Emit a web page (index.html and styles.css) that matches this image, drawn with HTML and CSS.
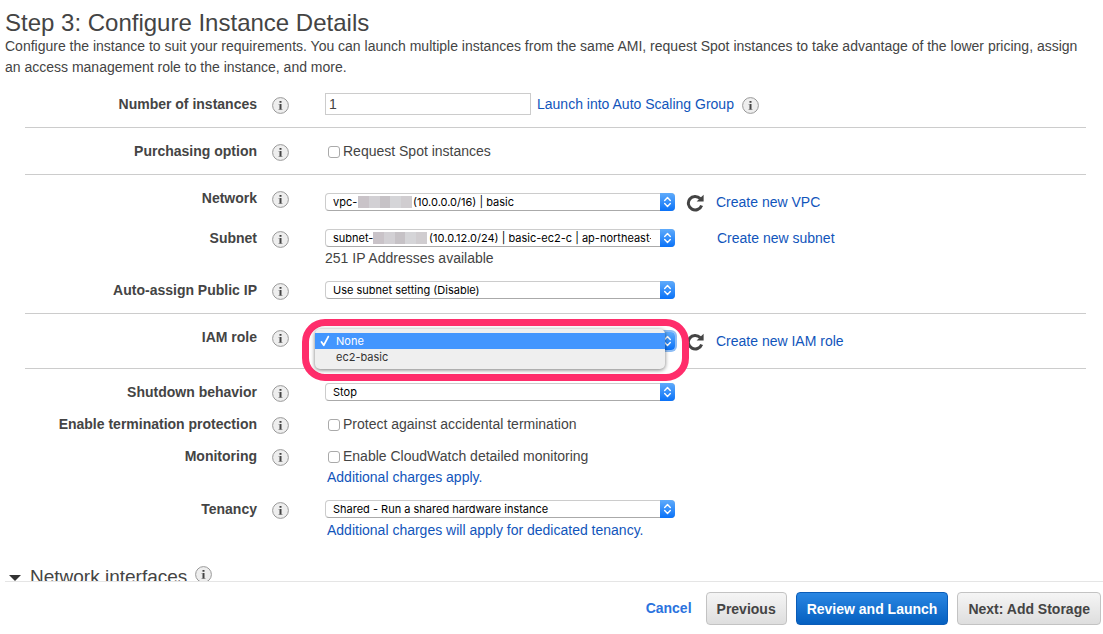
FILE: index.html
```
<!DOCTYPE html>
<html lang="en">
<head>
<meta charset="utf-8">
<title>Configure Instance Details</title>
<link rel="stylesheet" href="styles.css">
</head>
<body>
<svg class="defs" aria-hidden="true">
  <symbol id="info" viewBox="0 0 17 17">
    <circle cx="8.5" cy="8.5" r="7.9" fill="#eee" stroke="#999"/>
    <path d="M7.5 4h2v1.8h-2zM7.5 7h2v6h-2z" fill="#444"/>
    <path d="M6.5 7h1v.8h-1zM6.5 12.3h4v.7h-4z" fill="#888"/>
  </symbol>
  <symbol id="refresh" viewBox="0 0 18 18">
    <path d="M14.2 4.6A6.8 6.8 0 1 0 15.6 11.4" fill="none" stroke="#444" stroke-width="3"/>
    <path d="M17.6 .8V7.6H10.6z" fill="#444"/>
  </symbol>
  <symbol id="arrows" viewBox="0 0 15 18">
    <path d="M4.7 7.4l2.8-2.8 2.8 2.8M4.7 10.6l2.8 2.8 2.8-2.8" fill="none" stroke="#fff" stroke-width="1.4" stroke-linecap="round" stroke-linejoin="round"/>
  </symbol>
</svg>
<main class="content">
  <h1 class="title">Step 3: Configure Instance Details</h1>
  <p class="intro">Configure the instance to suit your requirements. You can launch multiple instances from the same AMI, request Spot instances to take advantage of the lower pricing, assign an access management role to the instance, and more.</p>
  <form class="form" id="config">
    <section class="group first">
      <div class="row">
        <label class="label" for="count">Number of instances</label>
        <button type="button" class="info" aria-label="About number of instances"><svg><use href="#info"/></svg></button>
        <div class="line low">
          <input class="text" id="count" type="text" value="1">
          <a class="link" href="#asg">Launch into Auto Scaling Group</a>
          <button type="button" class="info inline" aria-label="About Auto Scaling"><svg><use href="#info"/></svg></button>
        </div>
      </div>
    </section>
    <section class="group">
      <div class="row">
        <span class="label">Purchasing option</span>
        <button type="button" class="info" aria-label="About purchasing option"><svg><use href="#info"/></svg></button>
        <label class="check"><input class="box" type="checkbox">Request Spot instances</label>
      </div>
    </section>
    <section class="group">
      <div class="row">
        <label class="label" for="network">Network</label>
        <button type="button" class="info" aria-label="About network"><svg><use href="#info"/></svg></button>
        <div class="line tall">
          <div class="pick">
            <select class="select" id="network"><option>vpc-&nbsp;&nbsp;&nbsp;&nbsp;&nbsp;&nbsp;&nbsp;&nbsp;&nbsp;&nbsp;&nbsp;&nbsp;&nbsp;&nbsp;&nbsp;&nbsp;&nbsp;&nbsp;(10.0.0.0/16) | basic</option></select>
            <span class="mask vpc"></span>
            <svg class="cap"><use href="#arrows"/></svg>
          </div>
          <button type="button" class="refresh" aria-label="Refresh networks"><svg><use href="#refresh"/></svg></button>
          <a class="link" href="#vpc">Create new VPC</a>
        </div>
      </div>
      <div class="row">
        <label class="label" for="subnet">Subnet</label>
        <button type="button" class="info" aria-label="About subnet"><svg><use href="#info"/></svg></button>
        <div class="field">
          <div class="line slim">
            <div class="pick">
              <select class="select" id="subnet"><option>subnet-&nbsp;&nbsp;&nbsp;&nbsp;&nbsp;&nbsp;&nbsp;&nbsp;&nbsp;&nbsp;&nbsp;&nbsp;&nbsp;&nbsp;&nbsp;&nbsp;&nbsp;&nbsp;(10.0.12.0/24) | basic-ec2-c | ap-northeast-1c</option></select>
              <span class="mask sub"></span>
              <svg class="cap"><use href="#arrows"/></svg>
            </div>
            <a class="link far" href="#subnet">Create new subnet</a>
          </div>
          <p class="note">251 IP Addresses available</p>
        </div>
      </div>
      <div class="row">
        <label class="label" for="publicip">Auto-assign Public IP</label>
        <button type="button" class="info" aria-label="About public IP"><svg><use href="#info"/></svg></button>
        <div class="line">
          <div class="pick">
            <select class="select" id="publicip"><option>Use subnet setting (Disable)</option></select>
            <svg class="cap"><use href="#arrows"/></svg>
          </div>
        </div>
      </div>
    </section>
    <section class="group">
      <div class="row">
        <label class="label" for="role">IAM role</label>
        <button type="button" class="info" aria-label="About IAM role"><svg><use href="#info"/></svg></button>
        <div class="line tall">
          <div class="pick open">
            <select class="select" id="role"><option>None</option><option>ec2-basic</option></select>
            <svg class="cap"><use href="#arrows"/></svg>
            <div class="ring">
              <ul class="menu" role="listbox" aria-label="IAM role">
                <li class="item active" role="option" aria-selected="true"><svg class="tick" viewBox="0 0 10 12"><path d="M1.5 7l2.3 3.2L8.3 1.6" fill="none" stroke="#fff" stroke-width="1.8" stroke-linecap="round" stroke-linejoin="round"/></svg>None</li>
                <li class="item" role="option" aria-selected="false">ec2-basic</li>
              </ul>
            </div>
          </div>
          <button type="button" class="refresh" aria-label="Refresh roles"><svg><use href="#refresh"/></svg></button>
          <a class="link" href="#iam">Create new IAM role</a>
        </div>
      </div>
    </section>
    <section class="group last">
      <div class="row">
        <label class="label" for="shutdown">Shutdown behavior</label>
        <button type="button" class="info" aria-label="About shutdown behavior"><svg><use href="#info"/></svg></button>
        <div class="line">
          <div class="pick">
            <select class="select" id="shutdown"><option>Stop</option></select>
            <svg class="cap"><use href="#arrows"/></svg>
          </div>
        </div>
      </div>
      <div class="row">
        <span class="label">Enable termination protection</span>
        <button type="button" class="info" aria-label="About termination protection"><svg><use href="#info"/></svg></button>
        <label class="check"><input class="box" type="checkbox">Protect against accidental termination</label>
      </div>
      <div class="row">
        <span class="label">Monitoring</span>
        <button type="button" class="info" aria-label="About monitoring"><svg><use href="#info"/></svg></button>
        <div class="field">
          <label class="check"><input class="box" type="checkbox">Enable CloudWatch detailed monitoring</label>
          <p class="note"><a class="link more" href="#charges">Additional charges apply.</a></p>
        </div>
      </div>
      <div class="row">
        <label class="label" for="tenancy">Tenancy</label>
        <button type="button" class="info" aria-label="About tenancy"><svg><use href="#info"/></svg></button>
        <div class="field">
          <div class="line">
            <div class="pick">
              <select class="select" id="tenancy"><option>Shared - Run a shared hardware instance</option></select>
              <svg class="cap"><use href="#arrows"/></svg>
            </div>
          </div>
          <p class="note"><a class="link more" href="#dedicated">Additional charges will apply for dedicated tenancy.</a></p>
        </div>
      </div>
    </section>
  </form>
  <div class="expander">
    <svg class="caret" viewBox="0 0 12 6"><path d="M0 0h12L6 6z" fill="#333"/></svg>
    <h2 class="subtitle">Network interfaces</h2>
    <button type="button" class="info inline" aria-label="About network interfaces"><svg><use href="#info"/></svg></button>
  </div>
</main>
<footer class="footer">
  <a class="cancel" href="#cancel">Cancel</a>
  <button type="button" class="btn">Previous</button>
  <button type="submit" form="config" class="btn primary">Review and Launch</button>
  <button type="button" class="btn">Next: Add Storage</button>
</footer>
</body>
</html>
```
FILE: styles.css
```
* { box-sizing: border-box; }
body {
  margin: 0;
  height: 100vh;
  display: flex;
  flex-direction: column;
  overflow: hidden;
  background: #fff;
  color: #444;
  font: 14px/21px "Liberation Sans", Arial, sans-serif;
}
.defs { display: none; }
.content { flex: 1; min-height: 0; overflow: hidden; padding: 9px 5px 0; }
.title { margin: 0; font-size: 24px; line-height: 27px; font-weight: 400; }
.intro { margin: 0 8px 0 0; }
.form { margin: 0 12px 0 20px; }
.group { padding: 13px 0 12px; border-bottom: 1px solid #ccc; }
.first { padding-top: 16px; }
.last { border-bottom: 0; }
.row { display: flex; align-items: flex-start; }
.row + .row { margin-top: 11px; }
.label { width: 232px; text-align: right; font-weight: 700; }
.info { width: 17px; height: 17px; margin: 3px 36px 0 15px; padding: 0; border: 0; background: none; flex: none; }
.info svg, .refresh svg { display: block; width: 100%; height: 100%; }
.inline { margin: 1px 0 1px 8px; }
.line { display: flex; align-items: center; height: 21px; }
.low { align-items: flex-end; }
.tall { height: 29px; }
.slim { height: 20px; }
.text {
  width: 206px;
  height: 22px;
  margin-right: 6px;
  padding: 0 3px;
  border: 1px solid #ccc;
  color: #444;
  font: inherit;
}
.link { color: #1155bb; text-decoration: none; white-space: nowrap; }
.far { margin-left: 42px; }
.more { margin-left: 2px; }
.note { margin: 0; }
.check { display: flex; align-items: center; height: 21px; }
.box {
  appearance: none;
  width: 12px;
  height: 12px;
  margin: 1px 3px 0;
  border: 1px solid #aaa;
  border-radius: 3px;
  background: #fff;
}
.pick { position: relative; width: 350px; height: 18px; margin-bottom: 1px; flex: none; }
.select {
  appearance: none;
  display: block;
  width: 100%;
  height: 18px;
  padding: 0 23px 0 7px;
  border: 1px solid #ccc;
  border-bottom-color: #aaa;
  border-radius: 4px;
  background: #fff;
  color: #000;
  font: 11px/16px Inter, sans-serif;
}
.cap {
  position: absolute;
  top: 0;
  right: 0;
  width: 15px;
  height: 18px;
  border-radius: 0 4px 4px 0;
  background: linear-gradient(#5fabfb, #0a72f8);
}
.mask {
  position: absolute;
  top: 3px;
  height: 12px;
  background: linear-gradient(90deg, #c9c3c8 0 20%, #d2d0d4 20% 40%, #c6c2c6 40% 60%, #d5d5d8 60% 80%, #d0cdd0 80%);
}
.vpc { left: 33px; width: 54px; }
.sub { left: 48px; width: 54px; }
.refresh { width: 18px; height: 18px; margin: 0 12px 0 11px; padding: 0; border: 0; background: none; }
.open .cap { z-index: 2; box-shadow: 0 0 0 2px #8ebdf5; }
.ring {
  position: absolute;
  top: -13px;
  left: -23px;
  padding: 3px 17px 5px 6px;
  width: 387px;
  border: 7px solid #ff2d6b;
  border-radius: 23px;
  background: #fff;
}
.menu {
  position: relative;
  z-index: 3;
  margin: 0;
  padding: 4px 0;
  list-style: none;
  border-radius: 5px;
  background: #efefef;
  box-shadow: 0 1px 4px #0008;
  color: #333;
  font: 11px/16px Inter, sans-serif;
}
.item { position: relative; padding-left: 21px; height: 16px; }
.active { background: #4396fe; color: #fff; }
.tick { position: absolute; left: 5px; top: 2px; width: 10px; height: 12px; }
.expander { display: flex; align-items: flex-start; height: 24px; margin-top: 12px; padding-left: 4px; }
.caret { width: 12px; height: 6px; margin: 10px 9px 0 0; }
.subtitle { margin: 0; font-size: 19px; line-height: 24px; font-weight: 400; }
.footer {
  display: flex;
  justify-content: flex-end;
  align-items: center;
  height: 53px;
  margin-left: 5px;
  padding-right: 2px;
  gap: 9px;
  border-top: 1px solid #e5e5e5;
  flex: none;
}
.cancel { margin-right: 5px; padding-top: 1px; color: #2b73de; font-weight: 700; text-decoration: none; }
.btn {
  height: 33px;
  padding: 2px 10px 0;
  border: 1px solid #c3c3c3;
  border-radius: 4px;
  background: linear-gradient(#f5f5f5, #dedede);
  color: #444;
  font: 700 14px/21px "Liberation Sans", Arial, sans-serif;
}
.primary { border-color: #0a5cb8; background: linear-gradient(#2a86e2, #0560c0); color: #fff; }
```
